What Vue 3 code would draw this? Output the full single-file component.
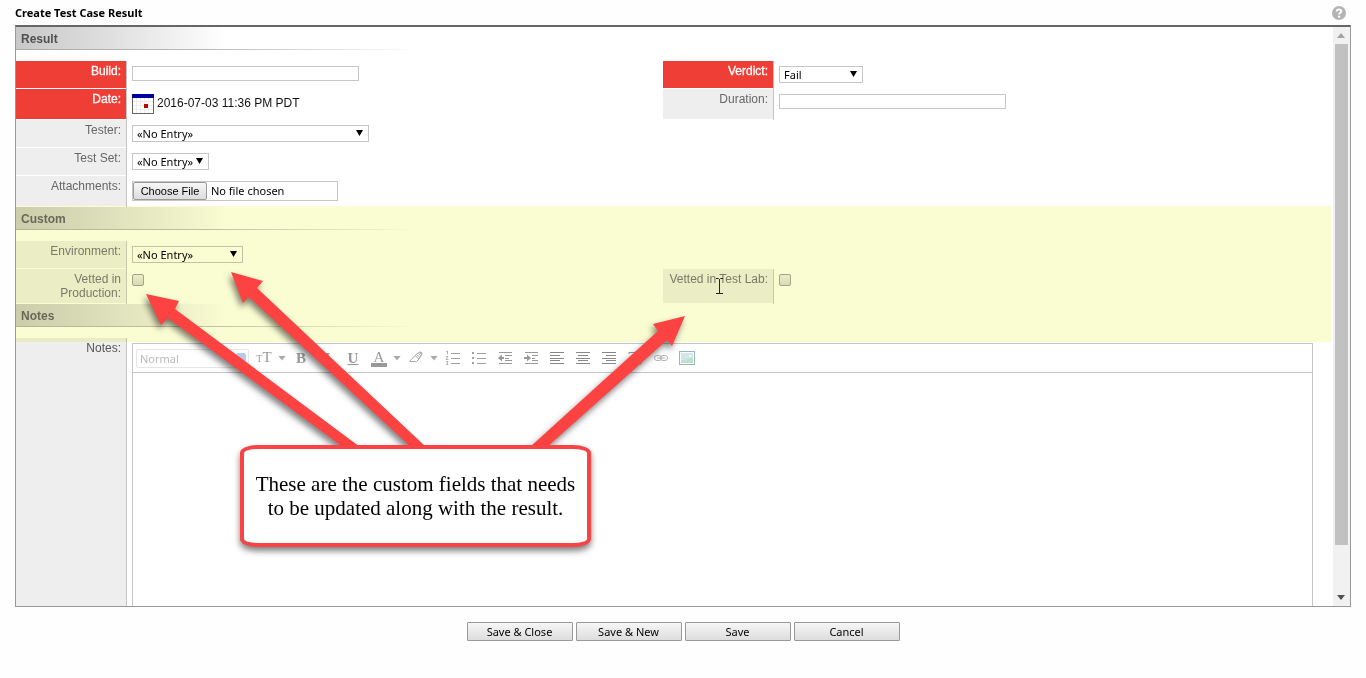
<script setup>
import { ref } from 'vue'

const build = ref('')
const duration = ref('')
const verdict = ref('Fail')
const vettedProduction = ref(false)
const vettedLab = ref(false)
const actions = ['Save & Close', 'Save & New', 'Save', 'Cancel']
</script>

<template>
  <div class="page">
    <header class="title-bar">
      <h1>Create Test Case Result</h1>
      <button class="help" type="button" aria-label="Help">
        <svg width="14" height="14" viewBox="0 0 14 14">
          <circle cx="7" cy="7" r="7" fill="#b4b4b4" />
          <path d="M4.8 5.4C4.8 2.8 9.3 2.8 9.3 5.2C9.3 6.8 7.1 6.7 7.1 8.6" fill="none" stroke="#fff" stroke-width="1.9" />
          <rect x="6.1" y="9.7" width="2" height="2" fill="#fff" />
        </svg>
      </button>
    </header>

    <main class="panel">
      <form class="form-body" @submit.prevent>
        <h2>Result</h2>
        <div class="columns">
          <div class="column">
            <div class="row">
              <label class="required" for="build">Build:</label>
              <div class="field"><input id="build" v-model="build" class="text" type="text" /></div>
            </div>
            <div class="row tall">
              <span class="label required">Date:</span>
              <div class="field date">
                <button class="calendar" type="button" aria-label="Pick a date">
                  <svg width="22" height="20" viewBox="0 0 22 20">
                    <rect width="22" height="20" fill="#666" />
                    <rect x="1" y="1" width="20" height="18" fill="#fff" />
                    <path d="M1 7.5H21M1 11.5H21M1 15.5H21M4.5 4V19M8.5 4V19M12.5 4V19M16.5 4V19" stroke="#ececec" />
                    <rect width="22" height="4" fill="#0000a0" />
                    <rect x="12" y="10" width="4" height="4" fill="#c00000" />
                  </svg>
                </button>
                <span>2016-07-03 11:36 PM PDT</span>
              </div>
            </div>
            <div class="row">
              <label for="tester">Tester:</label>
              <div class="field"><span class="drop wide"><select id="tester"><option>«No Entry»</option></select></span></div>
            </div>
            <div class="row">
              <label for="testset">Test Set:</label>
              <div class="field"><span class="drop small"><select id="testset"><option>«No Entry»</option></select></span></div>
            </div>
            <div class="row tall">
              <label for="files">Attachments:</label>
              <div class="field"><input id="files" class="file" type="file" /></div>
            </div>
          </div>
          <div class="column">
            <div class="row">
              <label class="required" for="verdict">Verdict:</label>
              <div class="field">
                <span class="drop verdict">
                  <select id="verdict" v-model="verdict"><option>Fail</option><option>Pass</option></select>
                </span>
              </div>
            </div>
            <div class="row tall">
              <label for="duration">Duration:</label>
              <div class="field"><input id="duration" v-model="duration" class="text" type="text" /></div>
            </div>
          </div>
        </div>

        <div class="marked">
          <h2>Custom</h2>
          <div class="columns">
            <div class="row">
              <label for="env">Environment:</label>
              <div class="field"><span class="drop medium"><select id="env"><option>«No Entry»</option></select></span></div>
            </div>
            <div class="row second left">
              <label for="production">Vetted in Production:</label>
              <div class="field"><input id="production" v-model="vettedProduction" type="checkbox" /></div>
            </div>
            <div class="row second">
              <label for="lab">Vetted in Test Lab:</label>
              <div class="field"><input id="lab" v-model="vettedLab" type="checkbox" /></div>
            </div>
          </div>
          <h2>Notes</h2>
        </div>

        <div class="row notes">
          <label for="notes">Notes:</label>
          <div class="field">
            <div class="editor">
              <div class="toolbar">
                <span class="format"><select aria-label="Paragraph style"><option>Normal</option></select></span>
                <button type="button" aria-label="Font size"><span class="glyph"><small>T</small>T</span></button>
                <i class="caret"></i>
                <button type="button" aria-label="Bold"><b class="glyph">B</b></button>
                <button type="button" aria-label="Italic"><b class="glyph italic">I</b></button>
                <button type="button" aria-label="Underline"><b class="glyph underline">U</b></button>
                <button type="button" aria-label="Text color"><span class="glyph color">A</span></button>
                <i class="caret"></i>
                <button type="button" aria-label="Highlight">
                  <svg width="16" height="16" viewBox="0 0 16 16" fill="none" stroke="#a9a9a9">
                    <path d="M1.5 11.5L7 5.5L11 9L8.5 11.5Z" />
                    <path d="M7 5.5L10.5 2.5C12 1.5 14.5 3.5 13.5 5.5L11 9M8.5 4.5L12 7.5M10 3L13 6" />
                    <path d="M12 2L14 4" stroke-width="2" />
                  </svg>
                </button>
                <i class="caret"></i>
                <button type="button" aria-label="Numbered list">
                  <svg width="16" height="16" viewBox="0 0 16 16" fill="none" stroke="#a0a0a0">
                    <path d="M6 3.5H15M6 8.5H15M6 13.5H15" />
                    <path d="M1 2L2.5 1V4.5M1 6.5H3L1 9.5H3.5M1 11.5H3L2 13L3 14.5H1" stroke-width=".8" />
                  </svg>
                </button>
                <button type="button" aria-label="Bulleted list">
                  <svg width="16" height="16" viewBox="0 0 16 16">
                    <path d="M6 3.5H15M6 8.5H15M6 13.5H15" stroke="#a0a0a0" />
                    <path d="M1 2H3V4H1ZM1 7H3V9H1ZM1 12H3V14H1Z" fill="#a0a0a0" />
                  </svg>
                </button>
                <button type="button" aria-label="Outdent">
                  <svg width="16" height="16" viewBox="0 0 16 16" stroke="#999" fill="none">
                    <path d="M2 2.5H15M8 5.5H15M8 8.5H12M8 10.5H15M2 13.5H15" />
                    <path d="M7 8H3" stroke-width="2" /><path d="M5 4.5V11.5L1 8Z" fill="#999" stroke="none" />
                  </svg>
                </button>
                <button type="button" aria-label="Indent">
                  <svg width="16" height="16" viewBox="0 0 16 16" stroke="#999" fill="none">
                    <path d="M2 2.5H15M9 5.5H15M9 8.5H12M9 10.5H15M2 13.5H15" />
                    <path d="M1 8H5" stroke-width="2" /><path d="M4 4.5V11.5L8 8Z" fill="#999" stroke="none" />
                  </svg>
                </button>
                <button type="button" aria-label="Align left">
                  <svg width="16" height="16" viewBox="0 0 16 16" stroke="#888"><path d="M1 2.5H15M1 5.5H11M1 8.5H15M1 10.5H11M1 13.5H15" /></svg>
                </button>
                <button type="button" aria-label="Align center">
                  <svg width="16" height="16" viewBox="0 0 16 16" stroke="#888"><path d="M1 2.5H15M3 5.5H13M1 8.5H15M3 10.5H13M1 13.5H15" /></svg>
                </button>
                <button type="button" aria-label="Align right">
                  <svg width="16" height="16" viewBox="0 0 16 16" stroke="#888"><path d="M1 2.5H15M5 5.5H15M1 8.5H15M5 10.5H15M1 13.5H15" /></svg>
                </button>
                <button type="button" aria-label="Remove formatting">
                  <svg width="16" height="16" viewBox="0 0 16 16" stroke="#999" fill="none">
                    <path d="M2 4V2.5H13V4M7.5 2.5V13M5 13.5H9" /><path d="M10 10L14 14M14 10L10 14" stroke-width="1.5" />
                  </svg>
                </button>
                <button type="button" aria-label="Insert link">
                  <svg width="16" height="16" viewBox="0 0 16 16" stroke="#b4b4b4" fill="none">
                    <rect x="1.5" y="5.5" width="7" height="5" rx="2.5" /><rect x="7.5" y="5.5" width="7" height="5" rx="2.5" />
                    <path d="M4 8H12" />
                  </svg>
                </button>
                <button type="button" aria-label="Insert image">
                  <svg width="16" height="14" viewBox="0 0 16 14">
                    <rect x=".5" y=".5" width="15" height="13" fill="#fff" stroke="#96b8b8" />
                    <rect x="2" y="2" width="12" height="10" fill="#d1e7ee" />
                    <path d="M2 9C6 10 9 7 14 7V12H2Z" fill="#c2dfcc" /><circle cx="11" cy="5" r="1" fill="#fff" />
                  </svg>
                </button>
              </div>
              <textarea id="notes"></textarea>
            </div>
          </div>
        </div>
      </form>
      <div class="scrollbar" aria-hidden="true">
        <i class="up"></i>
        <div class="track"><div class="thumb"></div></div>
        <i class="down"></i>
      </div>
    </main>

    <footer class="actions">
      <button v-for="action in actions" :key="action" type="button">{{ action }}</button>
    </footer>

    <!-- callout and its arrows lie over the form -->
    <svg class="arrows" width="700" height="460" viewBox="0 0 700 460" aria-hidden="true">
      <g fill="#fd4242">
        <path d="M146 294L179 301L175 309L360 447H343L168 318L161 325Z" />
        <path d="M231 272L263 281L257 288L426 447H411L249 297L243 303Z" />
        <path d="M685 316L653 324L658 331L530 447H547L667 340L672 346Z" />
      </g>
    </svg>
    <svg class="cursor" width="9" height="17" viewBox="0 0 9 17" aria-hidden="true">
      <path d="M1 .5H3.500L4.500 1.500L5.500 .5H8M4.500 1V15.500M1 15.500H8" fill="none" stroke="#222" />
    </svg>
    <aside class="callout">These are the custom fields that needs<br />to be updated along with the result.</aside>
  </div>
</template>

<style>
body {
  margin: 0;
  background: #fefefe;
}
</style>

<style scoped>
* {
  box-sizing: border-box;
}
.page {
  position: relative;
  display: flex;
  flex-direction: column;
  height: 100vh;
  padding: 0 15px;
  font-family: "Liberation Sans", Arial, sans-serif;
  font-size: 12px;
  line-height: 14px;
  color: #111;
}
button,
input,
select {
  margin: 0;
  font-family: "Noto Sans", "Segoe UI", sans-serif;
  font-size: 11px;
  color: #000;
}
.title-bar {
  display: flex;
  justify-content: space-between;
  align-items: center;
  height: 25px;
  padding-right: 5px;
}
h1 {
  margin: 0;
  font-family: "Noto Sans", "Segoe UI", sans-serif;
  font-size: 11px;
  font-weight: 700;
  color: #000;
}
.help {
  display: flex;
  padding: 0;
  border: 0;
  background: none;
}
.panel {
  display: flex;
  flex: 1;
  min-height: 0;
  border: 1px solid #999;
  border-top: 2px solid #666;
  background: #fff;
}
.form-body {
  flex: 1;
  min-width: 0;
  overflow: auto;
  scrollbar-width: none;
}
h2 {
  height: 23px;
  margin: 0 0 11px;
  padding: 0 5px;
  font-size: 12px;
  font-weight: 700;
  line-height: 24px;
  color: #505050;
  background:
    linear-gradient(to right, #aaa, #bbb 200px, transparent 400px) bottom / 100% 1px no-repeat,
    linear-gradient(to right, #c8c8c8, #dedede 90px, #fff 210px);
}
.columns {
  display: grid;
  grid-template-columns: 1fr 1fr;
  align-items: start;
  padding-right: 23px;
}
.left {
  grid-column: 1;
}
.row {
  display: flex;
  min-height: 28px;
}
.tall {
  min-height: 31px;
}
.second {
  min-height: 35px;
}
.row > label,
.label {
  flex: none;
  width: 111px;
  padding: 3px 5px;
  border-right: 1px solid #c4c4c4;
  text-align: right;
  color: #666;
  background: linear-gradient(#eee, #eee) top / 100% calc(100% - 1px) no-repeat;
}
.row > .required {
  color: #fff;
  background-image: linear-gradient(#ef3e35, #ef3e35);
  -webkit-text-stroke: 0.3px #fff;
}
.field {
  display: flex;
  flex: 1;
  align-items: flex-start;
  min-width: 0;
  padding: 5px 0 0 5px;
}
.date {
  gap: 3px;
}
.date span {
  line-height: 18px;
}
.calendar {
  display: flex;
  padding: 0;
  border: 0;
  background: none;
}
.text {
  width: 227px;
  height: 15px;
  padding: 0 3px;
  border: 1px solid #c6c6c6;
  background: #fff;
}
.drop {
  position: relative;
  display: flex;
  height: 17px;
}
.drop::after {
  content: "";
  position: absolute;
  top: 5px;
  right: 6px;
  width: 7px;
  height: 6px;
  background: #000;
  clip-path: polygon(0 0, 100% 0, 50% 100%);
  pointer-events: none;
}
.drop select {
  width: 100%;
  padding: 0 4px;
  border: 1px solid #c6c6c6;
  border-radius: 0;
  background: #fff;
  appearance: none;
  line-height: 15px;
}
.wide {
  width: 237px;
}
.small {
  width: 77px;
}
.medium {
  width: 111px;
}
.verdict {
  width: 84px;
}
.file {
  width: 206px;
  height: 20px;
  border: 1px solid #c6c6c6;
  background: #fff;
  line-height: 18px;
}
.file::file-selector-button {
  width: 74px;
  height: 18px;
  margin: 0 4px 0 0;
  padding: 0;
  border: 1px solid #999;
  border-radius: 2px;
  background: linear-gradient(#f6f6f6, #ddd);
  font-family: "Liberation Sans", Arial, sans-serif;
  font-size: 11px;
  color: #000;
}
input[type="checkbox"] {
  width: 12px;
  height: 12px;
  border: 1px solid #a5a5a5;
  border-radius: 2px;
  background: linear-gradient(#f0f0f0, #dedede);
  appearance: none;
}
input[type="checkbox"]:checked {
  background: #777;
}
.marked {
  position: relative;
}
.marked::after {
  content: "";
  position: absolute;
  inset: -1px 2px -15px 0;
  background: #fafcd2;
  mix-blend-mode: multiply;
  pointer-events: none;
}
.marked h2,
.marked label {
  opacity: 0.85;
}
.notes > label {
  color: #555;
}
.notes .field {
  padding-right: 20px;
}
.editor {
  flex: 1;
  min-width: 0;
  border: 1px solid #c6c6c6;
}
.toolbar {
  display: flex;
  align-items: center;
  height: 29px;
  padding-left: 3px;
  border-bottom: 1px solid #c6c6c6;
}
.toolbar button {
  display: flex;
  flex: none;
  justify-content: center;
  align-items: center;
  width: 26px;
  height: 24px;
  padding: 0;
  border: 0;
  background: none;
}
.format {
  position: relative;
  width: 113px;
  margin-right: 2px;
}
.format::after {
  content: "";
  position: absolute;
  top: 4px;
  right: 3px;
  width: 10px;
  height: 12px;
  border-radius: 2px;
  background: #b7cdf0;
  pointer-events: none;
}
.format select {
  display: block;
  width: 100%;
  height: 19px;
  padding: 0 3px;
  border: 1px solid #e6e6e6;
  border-radius: 2px;
  background: #fff;
  color: #b8b8b8;
  appearance: none;
}
.glyph {
  font-family: "Liberation Serif", "Times New Roman", serif;
  font-size: 15px;
  line-height: 16px;
  color: #999;
}
.glyph small {
  font-size: 10px;
}
.italic {
  font-style: italic;
}
.underline {
  text-decoration: underline;
}
.color {
  width: 16px;
  height: 18px;
  border-bottom: 4px solid #999;
}
.caret {
  flex: none;
  width: 11px;
  height: 5px;
  background: #aaa;
  clip-path: polygon(1px 0, 9px 0, 5px 100%);
}
textarea {
  display: block;
  width: 100%;
  height: 330px;
  padding: 8px;
  border: 0;
  outline: 0;
  resize: none;
}
.scrollbar {
  display: flex;
  flex-direction: column;
  flex: none;
  width: 17px;
  background: #f1f1f1;
}
.scrollbar i {
  flex: none;
  height: 17px;
  background: #a3a3a3;
  clip-path: polygon(4px 11px, 8px 6px, 12px 11px);
}
.scrollbar .down {
  background: #505050;
  clip-path: polygon(4px 6px, 12px 6px, 8px 11px);
}
.track {
  flex: 1;
  padding: 0 2px;
}
.thumb {
  height: 92%;
  background: #c1c1c1;
}
.actions {
  display: flex;
  justify-content: center;
  gap: 3px;
  height: 71px;
  padding-top: 15px;
}
.actions button {
  width: 106px;
  height: 19px;
  padding: 0;
  border: 1px solid #999;
  border-radius: 1px;
  background: linear-gradient(#f6f6f6, #ddd);
}
.arrows {
  position: absolute;
  top: 0;
  left: 0;
  filter: drop-shadow(-2px 4px 3px rgba(0, 0, 0, 0.5));
  pointer-events: none;
}
.cursor {
  position: absolute;
  top: 278px;
  left: 715px;
  pointer-events: none;
}
.callout {
  position: absolute;
  top: 445px;
  left: 240px;
  width: 351px;
  padding: 23px 0;
  border: 4px solid #fb4245;
  border-radius: 18px / 8px;
  background: #fff;
  box-shadow: 0 4px 6px rgba(0, 0, 0, 0.5);
  font-family: "Palatino Linotype", "Liberation Serif", serif;
  font-size: 21px;
  line-height: 24px;
  text-align: center;
  white-space: nowrap;
  color: #000;
}
</style>
